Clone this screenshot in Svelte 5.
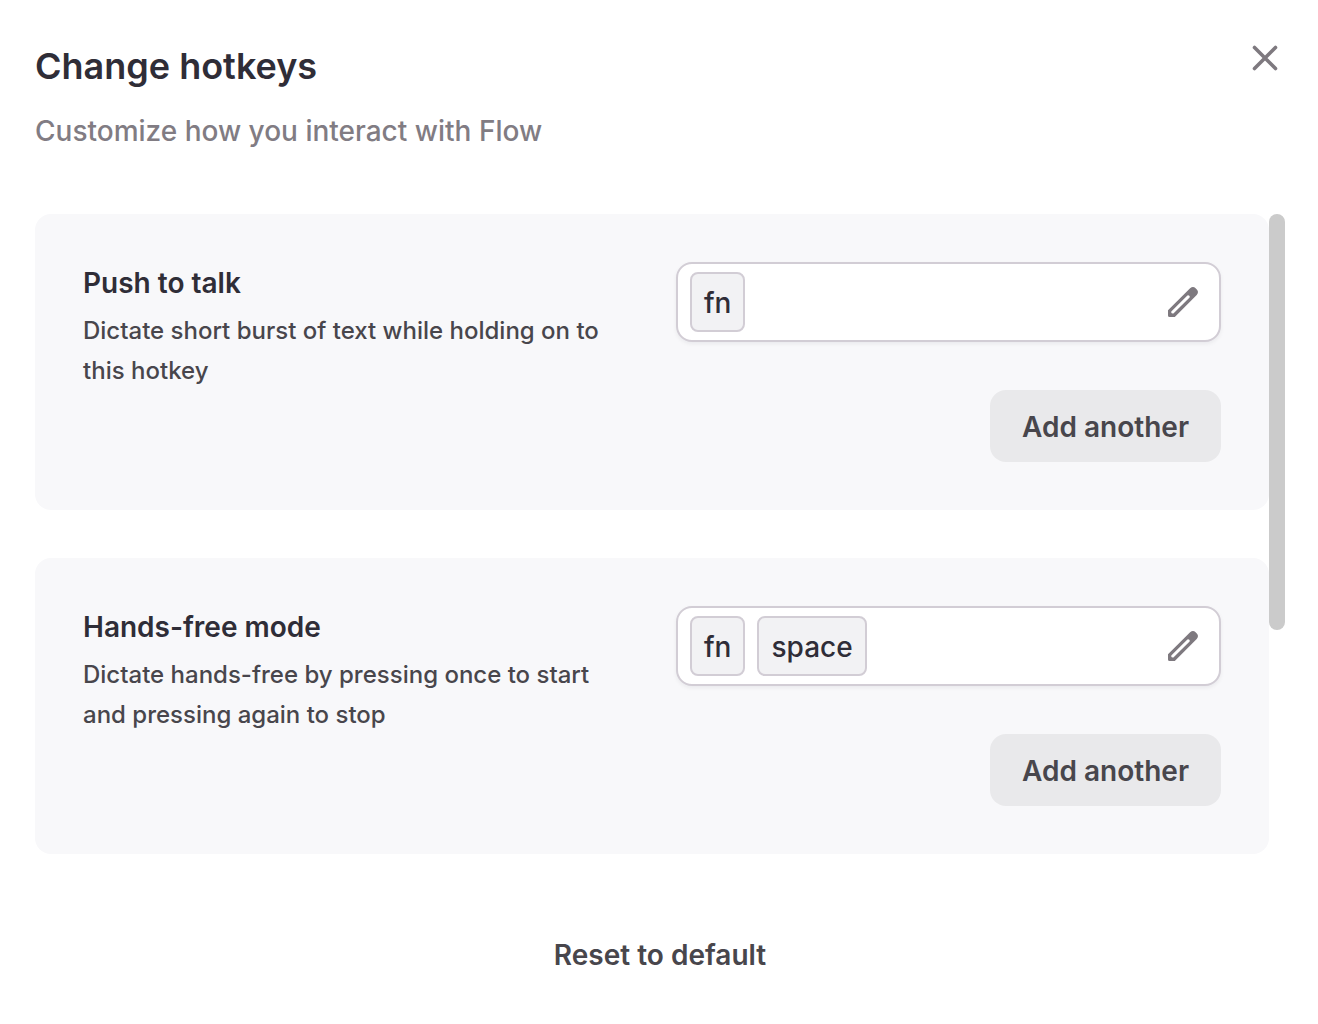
<script lang="ts">
	type Hotkey = {
		id: string;
		title: string;
		description: string;
		keys: string[];
	};

	const hotkeys: Hotkey[] = [
		{
			id: 'push-to-talk',
			title: 'Push to talk',
			description: 'Dictate short burst of text while holding on to this hotkey',
			keys: ['fn']
		},
		{
			id: 'hands-free',
			title: 'Hands-free mode',
			description: 'Dictate hands-free by pressing once to start and pressing again to stop',
			keys: ['fn', 'space']
		}
	];

	// Share of the list that is in view, in percent
	const visibleShare = 65;
</script>

<main class="dialog" aria-labelledby="dialog-title">
	<header class="dialog-header">
		<div class="heading">
			<h1 id="dialog-title">Change hotkeys</h1>
			<p>Customize how you interact with Flow</p>
		</div>
		<button type="button" class="icon-btn" aria-label="Close">
			<svg width="26" height="26" viewBox="0 0 26 26" fill="none">
				<path d="M2.5 2.5 23.5 23.5M23.5 2.5 2.5 23.5" stroke="currentColor" stroke-width="3.6" stroke-linecap="round" />
			</svg>
		</button>
	</header>

	<div class="scroll-area">
		<div class="hotkey-list">
			{#each hotkeys as hotkey (hotkey.id)}
				<section class="card" aria-labelledby={hotkey.id}>
					<div class="card-text">
						<h2 id={hotkey.id}>{hotkey.title}</h2>
						<p>{hotkey.description}</p>
					</div>
					<div class="card-controls">
						<div class="key-field">
							{#each hotkey.keys as key}
								<kbd>{key}</kbd>
							{/each}
							<button type="button" class="icon-btn edit" aria-label="Edit {hotkey.title}">
								<svg width="30" height="30" viewBox="0 0 30 30">
									<path
										fill="currentColor"
										fill-rule="evenodd"
										d="M0 23.2 22.1 1.3Q25 -1.2 27.6 1.2L28.8 2.4Q31.2 5 28.7 7.9L6.8 30H1.6Q0 30 0 28.4ZM3.3 24.6V25.8Q3.5 26.7 5.4 26.5L21.6 10.5Q22 9.5 21.3 8.8 20.5 8 19.4 8.5Z"
									/>
								</svg>
							</button>
						</div>
						<button type="button" class="btn btn-secondary">Add another</button>
					</div>
				</section>
			{/each}
		</div>
		<div class="scroll-track" aria-hidden="true">
			<div class="scroll-thumb" style="height: {visibleShare}%"></div>
		</div>
	</div>

	<footer class="dialog-footer">
		<button type="button" class="btn btn-ghost">Reset to default</button>
	</footer>
</main>

<style>
	:global(body) {
		background: #fff;
	}

	.dialog {
		padding: 42px 33px 33px 35px;
		font-family: Inter, 'Open Sans', sans-serif;
		font-size: 28px;
		line-height: 40px;
		font-weight: 500;
		color: #2f2d37;
	}

	h1,
	h2,
	p {
		margin: 0;
	}

	button,
	kbd {
		font: inherit;
	}

	/* Header */
	.dialog-header {
		display: flex;
		align-items: flex-start;
		justify-content: space-between;
		margin-bottom: 63px;
	}

	.heading {
		display: flex;
		flex-direction: column;
		gap: 21px;
	}

	h1 {
		font-size: 36px;
		line-height: 48px;
		font-weight: 600;
	}

	.heading p {
		color: #817c83;
	}

	.icon-btn {
		display: flex;
		padding: 0;
		border: 0;
		background: none;
		color: #7e797f;
		cursor: pointer;
	}

	.dialog-header .icon-btn {
		padding: 3px 7px;
	}

	/* Hotkey cards */
	.scroll-area {
		display: flex;
	}

	.hotkey-list {
		flex: 1;
		display: flex;
		flex-direction: column;
		gap: 48px;
	}

	.card {
		display: grid;
		grid-template-columns: 1fr 1fr;
		gap: 48px;
		padding: 48px;
		background: #f8f8fa;
		border-radius: 16px;
	}

	.card-text {
		padding-top: 1px;
	}

	h2 {
		font-size: 28px;
		line-height: 40px;
		font-weight: 600;
	}

	.card-text p {
		margin-top: 8px;
		font-size: 24px;
		color: #48464c;
	}

	.card-controls {
		display: flex;
		flex-direction: column;
		align-items: flex-end;
		gap: 48px;
	}

	.key-field {
		box-sizing: border-box;
		width: 100%;
		display: flex;
		align-items: center;
		gap: 12px;
		padding: 8px 21px 8px 12px;
		background: #fff;
		border: 2px solid #d2cdd5;
		border-radius: 16px;
		box-shadow: 0 2px 4px rgb(16 24 40 / 6%);
	}

	kbd {
		padding: 9px 12px 7px;
		background: #f2f2f4;
		border: 2px solid #d2cdd5;
		border-radius: 8px;
	}

	.edit {
		margin-left: auto;
	}

	/* Buttons */
	.btn {
		padding: 17px 32px 15px;
		border: 0;
		border-radius: 16px;
		font-weight: 600;
		color: #48464c;
		cursor: pointer;
	}

	.btn-secondary {
		background: #e9e9eb;
	}

	.btn-ghost {
		background: none;
	}

	/* Scrollbar */
	.scroll-track {
		width: 16px;
	}

	.scroll-thumb {
		background: #cbcbcb;
		border-radius: 8px;
	}

	.dialog-footer {
		display: flex;
		justify-content: center;
		margin-top: 64px;
	}
</style>
